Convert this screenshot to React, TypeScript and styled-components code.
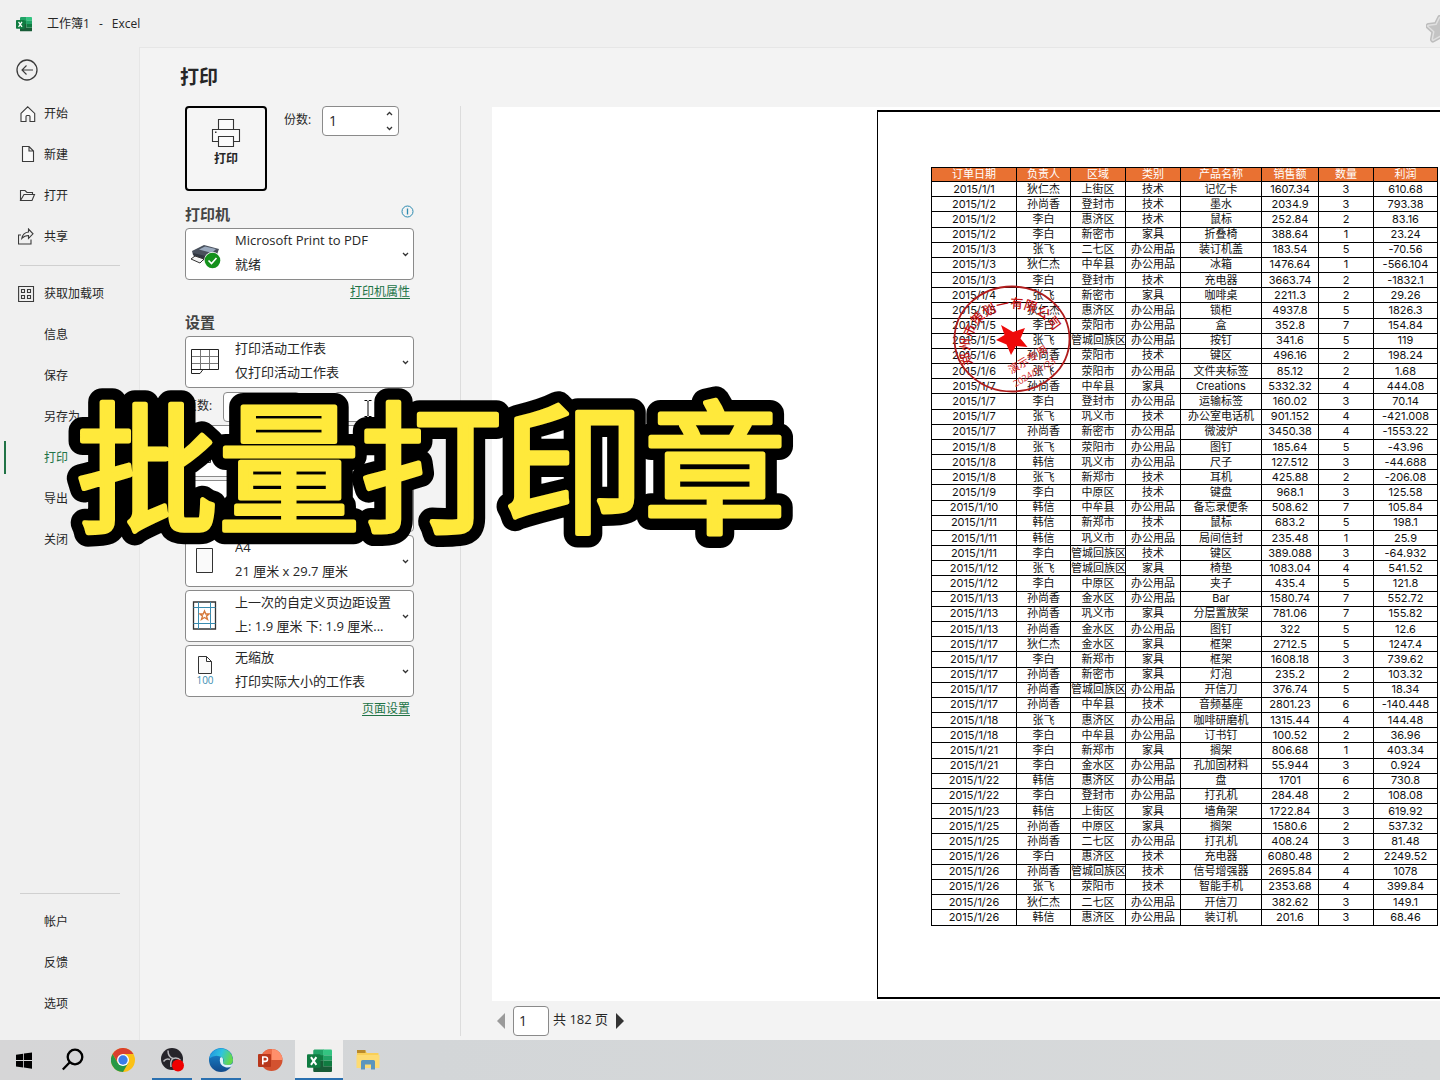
import React from "react";
import styled, { createGlobalStyle } from "styled-components";

const Global = createGlobalStyle`
  *, *::before, *::after { box-sizing: border-box; }
  body {
    margin: 0;
    background: #f0f0f0;
    color: #262626;
    font: 12px/18px "Open Sans", "Noto Sans CJK SC", sans-serif;
  }
  button, input, select { font: inherit; color: inherit; margin: 0; }
  svg { display: block; flex: none; }
`;

const Window = styled.div`
  position: relative;
  display: flex;
  flex-direction: column;
  min-height: 100vh;
  overflow: hidden;
`;

const TitleBar = styled.header`
  display: flex;
  align-items: center;
  gap: 9px;
  height: 47px;
  padding-left: 16px;
  overflow: hidden;
`;

const BookName = styled.span`
  margin-left: 6px;
`;

const StarTab = styled.div`
  margin: 11px -14px 0 auto;
`;

const Body = styled.div`
  flex: 1;
  display: flex;
`;

const Sidebar = styled.nav`
  width: 139px;
  flex: none;
  display: flex;
  flex-direction: column;
  padding-bottom: 16px;
`;

const BackButton = styled.button`
  display: flex;
  align-items: center;
  height: 46px;
  padding: 0 0 0 16px;
  border: 0;
  background: none;
`;

const NavItem = styled.button<{ $active?: boolean }>`
  display: flex;
  align-items: center;
  gap: 8px;
  height: 41px;
  padding: 0 0 0 14px;
  border: 0;
  border-left: 4px solid transparent;
  background: ${(p) =>
    p.$active ? "linear-gradient(#217346, #217346) 0 center / 2px 33px no-repeat" : "none"};
  color: ${(p) => (p.$active ? "#217346" : "#262626")};
  text-align: left;
  white-space: nowrap;
`;

const NavIcon = styled.span`
  width: 18px;
  height: 18px;
`;

const NavRule = styled.hr`
  height: 1px;
  width: 100px;
  margin: 8px 0 7px 20px;
  border: 0;
  background: #d0d0d0;
`;

const Spacer = styled.div`
  flex: 1;
`;

const Main = styled.main`
  flex: 1;
  min-width: 0;
  display: flex;
  flex-direction: column;
  border-left: 1px solid #e6e6e6;
  border-top: 1px solid #e6e6e6;
  background: #f3f3f3;
`;

const PageTitle = styled.h1`
  margin: 0;
  padding: 0 40px;
  font-size: 19px;
  line-height: 58px;
  font-weight: 700;
`;

const Columns = styled.div`
  flex: 1;
  display: flex;
`;

const Settings = styled.section`
  width: 321px;
  flex: none;
  margin-bottom: 4px;
  padding: 0 46px 0 45px;
  border-right: 1px solid #dcdcdc;
`;

const PrintRow = styled.div`
  display: flex;
  align-items: flex-start;
  height: 85px;
  margin-bottom: 9px;
`;

const PrintButton = styled.button`
  display: flex;
  flex-direction: column;
  align-items: center;
  gap: 2px;
  width: 82px;
  height: 85px;
  padding: 10px 0 0;
  border: 2px solid #000;
  border-radius: 4px;
  background: #f5f5f5;
  font-weight: 600;
`;

const FieldLabel = styled.label<{ $w: number; $inset?: number }>`
  width: ${(p) => p.$w}px;
  padding-left: ${(p) => p.$inset ?? 0}px;
  line-height: 28px;
  white-space: nowrap;
`;

const NumberBox = styled.span`
  display: flex;
  align-items: center;
  width: 77px;
  height: 30px;
  padding-right: 5px;
  border: 1px solid #8a8a8a;
  border-radius: 4px;
  background: #fff;
`;

const NumberInput = styled.input`
  flex: 1;
  width: 0;
  padding: 0 0 0 6px;
  border: 0;
  outline: 0;
  background: none;
  font-size: 14px;
  appearance: textfield;
  &::-webkit-inner-spin-button { appearance: none; }
`;

const SpinArrows = styled.span`
  display: flex;
  flex-direction: column;
  gap: 10px;
`;

const SectionHead = styled.div`
  display: flex;
  justify-content: space-between;
  align-items: flex-start;
  height: 28px;
  padding-top: 5px;
`;

const SectionTitle = styled.h2`
  margin: 0;
  color: #444;
  font-size: 15px;
  font-weight: 700;
`;

const ChoiceList = styled.div`
  display: flex;
  flex-direction: column;
  gap: 3px;
`;

const Choice = styled.div`
  display: grid;
  grid-template-columns: 49px 1fr 11px;
  grid-template-rows: 23px 24px;
  align-items: center;
  height: 52px;
  border: 1px solid #8a8a8a;
  border-radius: 4px;
  background: #fff;
  font-size: 13px;
  white-space: nowrap;
`;

const ChoiceIcon = styled.span`
  grid-area: 1 / 1 / 3 / 2;
  padding: 3px 0 0 4px;
`;

const ChoiceSelect = styled.select`
  grid-area: 1 / 1 / 3 / 4;
  align-self: stretch;
  width: 100%;
  padding: 0 0 25px 49px;
  border: 0;
  outline: 0;
  appearance: none;
  background: none;
`;

const ChoiceNote = styled.span`
  grid-area: 2 / 2 / 3 / 3;
  pointer-events: none;
`;

const ChoiceArrow = styled.span`
  grid-area: 1 / 3 / 3 / 4;
  padding-top: 3px;
  pointer-events: none;
`;

const LinkRow = styled.div`
  margin-bottom: 5px;
  padding-right: 4px;
  text-align: right;
  line-height: 23px;
`;

const GreenLink = styled.a`
  color: #217346;
  text-underline-offset: 2px;
`;

const PagesRow = styled.div`
  display: flex;
  margin: 4px 0 3px;
`;

const Preview = styled.section`
  flex: 1;
  min-width: 0;
  margin-left: 31px;
  padding-top: 1px;
  display: flex;
  flex-direction: column;
`;

const Canvas = styled.div`
  flex: 1;
  padding: 3px 0 2px 385px;
  background: #fff;
  overflow: hidden;
`;

const Sheet = styled.div`
  position: relative;
  height: 100%;
  padding: 55px 0 0 53px;
  border: solid #000;
  border-width: 2px 0 2px 1px;
  background: #fff;
`;

const DataTable = styled.table`
  width: 507px;
  height: 759px;
  table-layout: fixed;
  border-collapse: collapse;
  color: #111;
  font: 11px/13px Inter, "Noto Sans CJK SC", sans-serif;
  text-align: center;
  white-space: nowrap;
  th, td {
    padding: 0;
    border: 1px solid #000;
    overflow: hidden;
  }
  th {
    background: #e97132;
    color: #fff;
    font-weight: 400;
  }
`;

const Col = styled.col<{ $w: number }>`
  width: ${(p) => p.$w}px;
`;

const Seal = styled.svg`
  position: absolute;
  left: 72px;
  top: 170px;
`;

const Pager = styled.div`
  display: flex;
  align-items: center;
  gap: 4px;
  height: 39px;
  padding-left: 5px;
  font-size: 13px;
`;

const PageInput = styled.input`
  width: 36px;
  height: 30px;
  padding: 0 0 0 5px;
  border: 1px solid #8a8a8a;
  border-radius: 4px;
  background: #fff;
  font-size: 14px;
`;

const PageCount = styled.span`
  padding-bottom: 3px;
`;

const StepButton = styled.button`
  padding: 0 4px;
  border: 0;
  background: none;
  &:first-child { padding-left: 0; }
`;

const Taskbar = styled.footer`
  display: flex;
  gap: 1px;
  height: 40px;
  padding-left: 1px;
  background: linear-gradient(90deg, #d6d6d7, #d3d6d8 30%, #d8dadb);
`;

const Task = styled.button<{ $state?: "open" | "active" }>`
  display: flex;
  align-items: center;
  justify-content: center;
  width: 48px;
  padding: 0;
  border: 0;
  background: ${(p) =>
    p.$state === "active"
      ? "linear-gradient(#2a70b0, #2a70b0) center bottom / 48px 2px no-repeat, #f1f0ef"
      : p.$state === "open"
        ? "linear-gradient(#2a70b0, #2a70b0) center bottom / 40px 2px no-repeat"
        : "none"};
`;

const Caption = styled.svg`
  position: absolute;
  left: 60px;
  top: 350px;
  pointer-events: none;
`;

const TextCursor = styled.svg`
  position: absolute;
  left: 364px;
  top: 400px;
`;

const Line = ({ size = 18, children }: { size?: number; children: React.ReactNode }) => (
  <svg width={size} height={size} viewBox={`0 0 ${size} ${size}`} fill="none" stroke="#3b3b3b" strokeWidth="1.1">
    {children}
  </svg>
);

const HomeIcon = () => (
  <Line><path fill="#fafafa" d="M3 8.4 9.7 1.8 16.7 8.4V16.5H12V11.5q0-1-1-1H9q-1 0-1 1V16.5H3Z" /></Line>
);
const NewIcon = () => (
  <Line><path fill="#fafafa" d="M4.5 .5H11L15.5 5V15.5H4.5ZM11 .5V5H15.5" /></Line>
);
const OpenIcon = () => (
  <Line><path d="M2.5 13.5V3.5H7L9 5.5H14.5V7.5M2.5 13.5 6 7.5H16.5L14 13.5Z" /></Line>
);
const ShareIcon = () => (
  <Line><path d="M3 7H.5V16H13V11.5M10.5 1V4Q5 4.5 3.8 10.5 6.5 7.5 10.5 7.5V10.5L15 5.8Z" /></Line>
);
const AddinIcon = () => (
  <Line><path d="M.6 1.5H15.5V16.5H.6ZM3.5 4.5H6.5V7.5H3.5ZM9.5 4.5H12.5V7.5H9.5ZM3.5 10.5H6.5V13.5H3.5ZM9.5 10.5H12.5V13.5H9.5Z" /></Line>
);

const Chevron = ({ up }: { up?: boolean }) => (
  <svg width="7" height="5" viewBox="0 0 7 5" fill="none" stroke="#333" strokeWidth="1.3">
    <path d={up ? "M1 4 3.5 1.5 6 4" : "M1 1 3.5 3.5 6 1"} />
  </svg>
);

const PrinterIcon = () => (
  <svg width="30" height="30" viewBox="0 0 30 30" fill="#fafafa" stroke="#333" strokeWidth="1.1">
    <path d="M7.5 11V1.5H22.5V11M7.5 23.5H1.5V11.5H28.5V23.5H22.5" />
    <path d="M7.5 18.5H22.5V28.5H7.5Z" />
    <path d="M4 13.5H5.5V15H4Z" fill="#333" stroke="none" />
  </svg>
);

const DeviceIcon = () => (
  <svg width="32" height="32" viewBox="0 -4 32 32">
    <path d="M2 9 14 3 29 7 25 18 3 13Z" fill="#49505c" />
    <path d="M9 7.5 15 4.5 26 7 22 11Z" fill="#9aa9bd" />
    <path d="M3 11 20 15V22L16 23 13 17 4 15Z" fill="#303640" />
    <path d="M1 17 5 14 14 17 10 21Z" fill="#f4f4f4" stroke="#333" strokeWidth="1" />
    <circle cx="22.500" cy="18.500" r="8.500" fill="#fff" />
    <circle cx="22.500" cy="18.500" r="7.800" fill="#14911c" />
    <path d="M18.500 18.500 21.500 21.500 26.500 16" fill="none" stroke="#fff" strokeWidth="1.600" />
  </svg>
);

const SheetIcon = () => (
  <svg width="30" height="32" viewBox="0 0 30 32" fill="none" stroke="#777" strokeWidth="1">
    <path d="M1.5 10.5H28.5M1.5 17.5H28.5M10.5 3.5V23.5M19.5 3.5V23.5" />
    <path stroke="#222" d="M1.5 3.5H28.5V23.5H13L10 27.5H1.5ZM1.5 23.5H13" />
  </svg>
);

const PaperIcon = () => (
  <svg width="30" height="32" viewBox="0 0 30 32">
    <path d="M6.5 3.5H22.5V27.5H6.5Z" fill="#fafafa" stroke="#333" />
  </svg>
);

const MarginIcon = () => (
  <svg width="30" height="32" viewBox="0 1 30 32" fill="none">
    <path stroke="#333" strokeWidth="1.3" d="M3.5 3H25.5V30H3.5Z" />
    <path stroke="#3a8cb0" d="M8.5 3V30M20.5 3V30M3.5 8.5H25.5M3.5 24.5H25.5" />
    <path stroke="#d67a3c" strokeWidth="1.4" d="m14.5 12 1.3 3h3.2l-2.5 2.1 1 3.3-3-1.9-3 1.9 1-3.3-2.5-2.1h3.2Z" />
  </svg>
);

const ScaleIcon = () => (
  <svg width="30" height="32" viewBox="0 0 30 32">
    <path d="M8.5 1.5H16.5L21.5 6.5V18.5H8.5ZM16.5 1.5V6.5H21.5" fill="#fafafa" stroke="#333" />
    <text x="15" y="29" textAnchor="middle" fontSize="10" fill="#3a8cb0">100</text>
  </svg>
);

const DuplexIcon = () => (
  <svg width="30" height="32" viewBox="0 0 30 32" fill="#fafafa" stroke="#333">
    <path d="M5.5 3.5H15.5V15.5H5.5ZM10.5 14.5H20.5V27.5H10.5Z" />
  </svg>
);

const ExcelLogo = ({ size }: { size: number }) => (
  <svg width={size} height={size} viewBox="0 0 24 24">
    <path d="M7 1.5H16V12H6V2.5Z" fill="#21a366" />
    <path d="M15.5 1.5H23Q24 1.5 24 2.5V7H15.5Z" fill="#33c481" />
    <path d="M6 7H15.5V12H6Z" fill="#107c41" />
    <path d="M15.5 7H24V12H15.5Z" fill="#21a366" />
    <path d="M6 12H15.5V17.5H24V22Q24 23 23 23H7Q6 23 6 22Z" fill="#185c37" />
    <path d="M15.5 12H24V17.5H15.5Z" fill="#107c41" />
    <rect x="0" y="6" width="13" height="13" rx="1" fill="#107c41" />
    <path d="M3.8 8.7 9 16.2M9 8.7 3.8 16.2" stroke="#fff" strokeWidth="1.9" />
  </svg>
);

const WindowsLogo = () => (
  <svg width="18" height="17" viewBox="0 0 18 17">
    <path d="M0 2.7 7.2 1.7V8H0ZM8 1.5 16 .4V8H8ZM0 8.9H7.2V15.4L0 14.4ZM8 8.9H16V16.8L8 15.6Z" />
  </svg>
);
const SearchIcon = () => (
  <svg width="24" height="24" viewBox="0 0 24 24" fill="none" stroke="#000" strokeWidth="2.3">
    <circle cx="13" cy="9" r="7.3" /><path d="M7.8 14.2 .8 21.5" />
  </svg>
);
const ChromeLogo = () => (
  <svg width="24" height="24" viewBox="0 0 24 24">
    <circle cx="12" cy="12" r="12" fill="#fbc116" />
    <path d="M1.6 6A12 12 0 0 1 22.4 6H12L7 15Z" fill="#d9402f" />
    <path d="M1.6 6A12 12 0 0 0 12 24L17.2 15 12 17.5 6.8 15Z" fill="#279847" />
    <circle cx="12" cy="12" r="6" fill="#fff" /><circle cx="12" cy="12" r="4.7" fill="#3b7de8" />
  </svg>
);
const ObsLogo = () => (
  <svg width="24" height="24" viewBox="-1 0 24 24">
    <circle cx="11" cy="11" r="11" fill="#25242a" />
    <g fill="none" stroke="#b8b8bc" strokeWidth="1.5">
      <path d="M7 2.5Q7 9 12 10.5 17 9 19.5 12.5" /><path d="M12 10.5Q9 13 10 19" /><path d="M2.5 13.5Q5 10 9 11.5" />
    </g>
    <circle cx="17" cy="17.5" r="6" fill="#f00000" />
  </svg>
);
const EdgeLogo = () => (
  <svg width="24" height="24" viewBox="0 0 24 24">
    <defs>
      <linearGradient id="edgeTop" x1="0" y1="0" x2="1" y2="0.3">
        <stop offset="0" stopColor="#1f8fdf" /><stop offset="0.55" stopColor="#2fc3df" /><stop offset="1" stopColor="#63d94f" />
      </linearGradient>
      <linearGradient id="edgeLow" x1="0" y1="0" x2="0" y2="1">
        <stop offset="0" stopColor="#1b8fd8" /><stop offset="1" stopColor="#114a8b" />
      </linearGradient>
    </defs>
    <circle cx="12" cy="12" r="12" fill="url(#edgeLow)" />
    <path d="M.2 10.5A12 12 0 0 1 24 11.5Q24 17 18.5 17 13.5 17 14 14 15.5 11 13 9.2 6.5 5.5 .2 10.5Z" fill="url(#edgeTop)" />
    <path d="M11 10Q9.5 17 16.5 19.3 20 20 22.5 18.3L24 15.5Q22 17 18.5 17 13.5 17 14 14 15 11 13 9.2 11.5 9 11 10Z" fill="#dff3fa" />
  </svg>
);
const PowerPointLogo = () => (
  <svg width="25" height="24" viewBox="0 0 25 24">
    <circle cx="13.5" cy="12" r="11" fill="#d35230" />
    <path d="M13.5 1A11 11 0 0 1 24.5 12H13.5Z" fill="#ff8f6b" />
    <path d="M13.5 1A11 11 0 0 0 2.5 12H13.5Z" fill="#ed6c47" />
    <rect x="0" y="6" width="13" height="13" rx="1" fill="#b8371b" />
    <path d="M4.8 16.5V9H7.2Q9.5 9 9.5 11.2T7.2 13.4H4.8" fill="none" stroke="#fff" strokeWidth="1.6" />
  </svg>
);
const FolderLogo = () => (
  <svg width="24" height="22" viewBox="0 0 24 22">
    <path d="M1 1.5H9L11 4H22.5V19H1Z" fill="#f9cf57" />
    <path d="M1 1H9.5V4H1Z" fill="#b98a2c" />
    <path d="M.5 6H23.5V19H.5Z" fill="#fddb73" />
    <path d="M5 20.5V12.5Q5 11 6.5 11H17.5Q19 11 19 12.5V20.5H15V15.5H9V20.5Z" fill="#5b95bd" />
  </svg>
);

type ChoiceProps = { label: string; value: string; note: string; icon: React.ReactNode };
const ChoiceBox = ({ label, value, note, icon }: ChoiceProps) => (
  <Choice>
    <ChoiceIcon>{icon}</ChoiceIcon>
    <ChoiceSelect aria-label={label}><option>{value}</option></ChoiceSelect>
    <ChoiceNote>{note}</ChoiceNote>
    <ChoiceArrow><Chevron /></ChoiceArrow>
  </Choice>
);

const Spin = ({ id, value }: { id: string; value?: number }) => (
  <NumberBox>
    <NumberInput id={id} type="number" defaultValue={value} />
    <SpinArrows><Chevron up /><Chevron /></SpinArrows>
  </NumberBox>
);

const headings = ["订单日期", "负责人", "区域", "类别", "产品名称", "销售额", "数量", "利润"];
const widths = [85, 54, 55, 55, 81, 57, 55, 64];

const orders = `1/1 狄仁杰 上街区 技术 记忆卡 1607.34 3 610.68
1/2 孙尚香 登封市 技术 墨水 2034.9 3 793.38
1/2 李白 惠济区 技术 鼠标 252.84 2 83.16
1/2 李白 新密市 家具 折叠椅 388.64 1 23.24
1/3 张飞 二七区 办公用品 装订机盖 183.54 5 -70.56
1/3 狄仁杰 中牟县 办公用品 冰箱 1476.64 1 -566.104
1/3 李白 登封市 技术 充电器 3663.74 2 -1832.1
1/4 张飞 新密市 家具 咖啡桌 2211.3 2 29.26
1/5 狄仁杰 惠济区 办公用品 锁柜 4937.8 5 1826.3
1/5 李白 荥阳市 办公用品 盒 352.8 7 154.84
1/5 张飞 管城回族区 办公用品 按钉 341.6 5 119
1/6 孙尚香 荥阳市 技术 键区 496.16 2 198.24
1/6 张飞 荥阳市 办公用品 文件夹标签 85.12 2 1.68
1/7 孙尚香 中牟县 家具 Creations 5332.32 4 444.08
1/7 李白 登封市 办公用品 运输标签 160.02 3 70.14
1/7 张飞 巩义市 技术 办公室电话机 901.152 4 -421.008
1/7 孙尚香 新密市 办公用品 微波炉 3450.38 4 -1553.22
1/8 张飞 荥阳市 办公用品 图钉 185.64 5 -43.96
1/8 韩信 巩义市 办公用品 尺子 127.512 3 -44.688
1/8 张飞 新郑市 技术 耳机 425.88 2 -206.08
1/9 李白 中原区 技术 键盘 968.1 3 125.58
1/10 韩信 中牟县 办公用品 备忘录便条 508.62 7 105.84
1/11 韩信 新郑市 技术 鼠标 683.2 5 198.1
1/11 韩信 巩义市 办公用品 局间信封 235.48 1 25.9
1/11 李白 管城回族区 技术 键区 389.088 3 -64.932
1/12 张飞 管城回族区 家具 椅垫 1083.04 4 541.52
1/12 李白 中原区 办公用品 夹子 435.4 5 121.8
1/13 孙尚香 金水区 办公用品 Bar 1580.74 7 552.72
1/13 孙尚香 巩义市 家具 分层置放架 781.06 7 155.82
1/13 孙尚香 金水区 办公用品 图钉 322 5 12.6
1/17 狄仁杰 金水区 家具 框架 2712.5 5 1247.4
1/17 李白 新郑市 家具 框架 1608.18 3 739.62
1/17 孙尚香 新密市 家具 灯泡 235.2 2 103.32
1/17 孙尚香 管城回族区 办公用品 开信刀 376.74 5 18.34
1/17 孙尚香 中牟县 技术 音频基座 2801.23 6 -140.448
1/18 张飞 惠济区 办公用品 咖啡研磨机 1315.44 4 144.48
1/18 李白 中牟县 办公用品 订书钉 100.52 2 36.96
1/21 李白 新郑市 家具 搁架 806.68 1 403.34
1/21 李白 金水区 办公用品 孔加固材料 55.944 3 0.924
1/22 韩信 惠济区 办公用品 盘 1701 6 730.8
1/22 李白 登封市 办公用品 打孔机 284.48 2 108.08
1/23 韩信 上街区 家具 墙角架 1722.84 3 619.92
1/25 孙尚香 中原区 家具 搁架 1580.6 2 537.32
1/25 孙尚香 二七区 办公用品 打孔机 408.24 3 81.48
1/26 李白 惠济区 技术 充电器 6080.48 2 2249.52
1/26 孙尚香 管城回族区 技术 信号增强器 2695.84 4 1078
1/26 张飞 荥阳市 技术 智能手机 2353.68 4 399.84
1/26 狄仁杰 二七区 办公用品 开信刀 382.62 3 149.1
1/26 韩信 惠济区 办公用品 装订机 201.6 3 68.46`
  .split("\n")
  .map((row) => `2015/${row}`.split(" "));

const CompanySeal = () => (
  <Seal width="124" height="114" viewBox="0 0 124 114" fill="#c41414">
    <defs><path id="sealArc" d="M23 82A44 41 0 1 1 106 79" /></defs>
    <ellipse cx="62" cy="57" rx="57.5" ry="52.5" fill="none" stroke="#b01c1c" strokeWidth="1.8" />
    <text fontSize="13" fontWeight="500"><textPath href="#sealArc">郑州市策划一有限公司</textPath></text>
    <path fill="#ee0a0a" d="M51 43 63 50 75 46 70.5 56.5 77.5 65 66 64 61 73 56.500 62.500 46 58 54.500 53Z" />
    <g textAnchor="middle" fill="#d32a2a">
      <text fontSize="11" transform="translate(80 81) rotate(-31)">演示专用</text>
      <text fontSize="9" transform="translate(86 93) rotate(-31)">2024/01/23</text>
    </g>
  </Seal>
);

export default function App() {
  return (
    <Window>
      <Global />
      <TitleBar>
        <ExcelLogo size={16} />
        <BookName>工作簿1</BookName>
        <span>-</span>
        <span>Excel</span>
        <StarTab>
          <svg width="28" height="28" viewBox="0 0 28 28" strokeLinejoin="round">
            <path d="m14 3 3.5 7 8 1-6 5.5 1.5 8-7-4-7 4 1.5-8-6-5.5 8-1Z" fill="#c4c4c4" stroke="#bdbdbd" strokeWidth="6" />
            <path d="m14 3 3.5 7 8 1-6 5.5 1.5 8-7-4-7 4 1.5-8-6-5.5 8-1Z" fill="#c4c4c4" stroke="#e0e0e0" strokeWidth="3" />
            <path d="m14 3 3.5 7 8 1-6 5.5 1.5 8-7-4-7 4 1.5-8-6-5.5 8-1Z" fill="#c4c4c4" />
          </svg>
        </StarTab>
      </TitleBar>
      <Body>
        <Sidebar>
          <BackButton aria-label="返回">
            <Line size={22}><circle cx="11" cy="11" r="10" strokeWidth="1.3" /><path d="M17 11H6M10.5 6.5 6 11 10.5 15.5" /></Line>
          </BackButton>
          <NavItem><HomeIcon />开始</NavItem>
          <NavItem><NewIcon />新建</NavItem>
          <NavItem><OpenIcon />打开</NavItem>
          <NavItem><ShareIcon />共享</NavItem>
          <NavRule />
          <NavItem><AddinIcon />获取加载项</NavItem>
          {["信息", "保存", "另存为", "打印", "导出", "关闭"].map((t) => (
            <NavItem key={t} $active={t === "打印"}><NavIcon />{t}</NavItem>
          ))}
          <Spacer />
          <NavRule />
          {["帐户", "反馈", "选项"].map((t) => (
            <NavItem key={t}><NavIcon />{t}</NavItem>
          ))}
        </Sidebar>
        <Main>
          <PageTitle>打印</PageTitle>
          <Columns>
            <Settings>
              <PrintRow>
                <PrintButton><PrinterIcon />打印</PrintButton>
                <FieldLabel htmlFor="copies" $w={55} $inset={17}>份数:</FieldLabel>
                <Spin id="copies" value={1} />
              </PrintRow>
              <SectionHead>
                <SectionTitle>打印机</SectionTitle>
                <svg width="13" height="13" viewBox="0 0 13 13" fill="none" stroke="#2b8ab0">
                  <circle cx="6.5" cy="6.5" r="5.5" /><path d="M6.5 3.5V9.5" strokeWidth="1.3" />
                </svg>
              </SectionHead>
              <ChoiceList>
                <ChoiceBox label="打印机" value="Microsoft Print to PDF" note="就绪" icon={<DeviceIcon />} />
              </ChoiceList>
              <LinkRow><GreenLink href="#printer">打印机属性</GreenLink></LinkRow>
              <SectionHead><SectionTitle>设置</SectionTitle></SectionHead>
              <ChoiceList>
                <ChoiceBox label="打印范围" value="打印活动工作表" note="仅打印活动工作表" icon={<SheetIcon />} />
              </ChoiceList>
              <PagesRow>
                <FieldLabel htmlFor="from" $w={38}>页数:</FieldLabel>
                <Spin id="from" />
                <FieldLabel htmlFor="to" $w={34} $inset={11}>至</FieldLabel>
                <Spin id="to" />
              </PagesRow>
              <ChoiceList>
                <ChoiceBox label="对照" value="对照" note="1,2,3" icon={<DuplexIcon />} />
                <ChoiceBox label="方向" value="纵向" note="" icon={<PaperIcon />} />
                <ChoiceBox label="纸张" value="A4" note="21 厘米 x 29.7 厘米" icon={<PaperIcon />} />
                <ChoiceBox label="页边距" value="上一次的自定义页边距设置" note="上: 1.9 厘米 下: 1.9 厘米..." icon={<MarginIcon />} />
                <ChoiceBox label="缩放" value="无缩放" note="打印实际大小的工作表" icon={<ScaleIcon />} />
              </ChoiceList>
              <LinkRow><GreenLink href="#page">页面设置</GreenLink></LinkRow>
            </Settings>
            <Preview>
              <Canvas>
                <Sheet>
                  <DataTable>
                    <colgroup>{widths.map((w, i) => <Col key={i} $w={w} />)}</colgroup>
                    <thead><tr>{headings.map((h) => <th key={h}>{h}</th>)}</tr></thead>
                    <tbody>
                      {orders.map((row, r) => (
                        <tr key={r}>{row.map((cell, c) => <td key={c}>{cell}</td>)}</tr>
                      ))}
                    </tbody>
                  </DataTable>
                  <CompanySeal />
                </Sheet>
              </Canvas>
              <Pager>
                <StepButton aria-label="上一页">
                  <svg width="8" height="16" viewBox="0 0 8 16"><path d="M8 0V16L0 8Z" fill="#9a9a9a" /></svg>
                </StepButton>
                <PageInput aria-label="页码" defaultValue="1" />
                <PageCount>共 182 页</PageCount>
                <StepButton aria-label="下一页">
                  <svg width="8" height="16" viewBox="0 0 8 16"><path d="M0 0V16L8 8Z" fill="#333" /></svg>
                </StepButton>
              </Pager>
            </Preview>
          </Columns>
        </Main>
      </Body>
      <Taskbar>
        <Task aria-label="开始菜单"><WindowsLogo /></Task>
        <Task aria-label="搜索"><SearchIcon /></Task>
        <Task aria-label="Chrome"><ChromeLogo /></Task>
        <Task aria-label="OBS" $state="open"><ObsLogo /></Task>
        <Task aria-label="Edge" $state="open"><EdgeLogo /></Task>
        <Task aria-label="PowerPoint"><PowerPointLogo /></Task>
        <Task aria-label="Excel" $state="active"><ExcelLogo size={25} /></Task>
        <Task aria-label="文件资源管理器"><FolderLogo /></Task>
      </Taskbar>
      <TextCursor width="8" height="17" viewBox="0 0 8 17" fill="none" stroke="#000">
        <path d="M.5 .5H3L4 1.5 5 .5H7.5M4 1.5V15.5M.5 16.5H3L4 15.5 5 16.5H7.5" />
      </TextCursor>
      <Caption width="760" height="240" viewBox="0 0 760 240">
        <g fontFamily="'Noto Sans CJK SC', sans-serif" fontSize="142" strokeLinejoin="round">
          <use href="#captionText" stroke="#000" strokeWidth="28" />
          <g fill="#ffe93b" stroke="#ffe93b" strokeWidth="5">
            <text id="captionText" x="16" y="172">批量打印章</text>
          </g>
        </g>
      </Caption>
    </Window>
  );
}
